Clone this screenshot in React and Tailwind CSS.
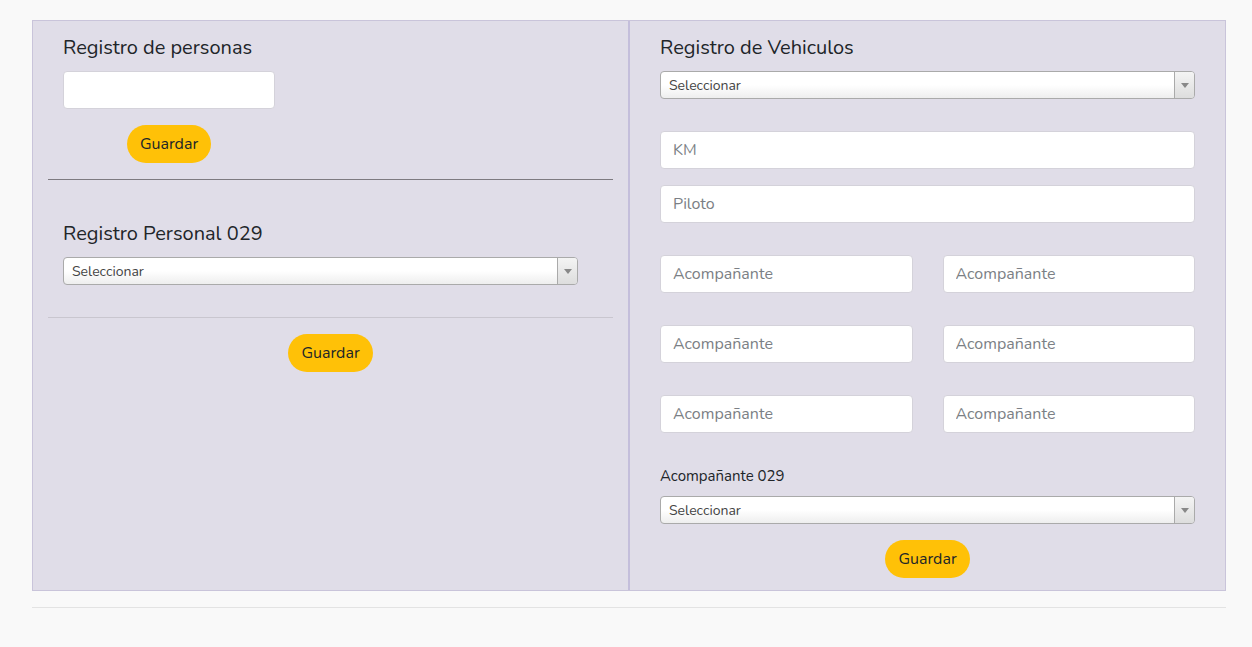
import React from "react";

const font = { fontFamily: '"Nunito", Lato, "Open Sans", sans-serif' };

function Select() {
  return (
    <div className="flex h-[28px] w-full items-stretch overflow-hidden rounded-[4px] border border-[#aaaaaa] bg-gradient-to-b from-white from-50% to-[#eeeeee]">
      <div className="flex flex-1 items-center pl-[8px] text-[14px] text-[#444444]">Seleccionar</div>
      <div className="flex w-[20px] items-center justify-center border-l border-[#aaaaaa] bg-gradient-to-b from-[#f4f4f4] to-[#dddddd]">
        <svg width="8" height="5" viewBox="0 0 8 5"><path d="M0 0h8L4 5z" fill="#888888" /></svg>
      </div>
    </div>
  );
}

function Input({ placeholder, className = "" }) {
  return (
    <input
      placeholder={placeholder}
      style={font}
      className={`h-[38px] rounded-[4px] border border-[#d4d2da] bg-white px-[12px] text-[16px] text-[#495057] placeholder:text-[#7b7f85] outline-none ${className}`}
    />
  );
}

function Btn({ className = "" }) {
  return (
    <button style={font} className={`h-[38px] rounded-full bg-[#ffc107] px-[13px] text-[16px] text-[#212529] ${className}`}>
      Guardar
    </button>
  );
}

export default function App() {
  return (
    <div style={font} className="min-h-[647px] w-full bg-[#f9f9f9] pl-[32px] pr-[26px] pt-[20px] text-[#212529]">
      <div className="flex border border-[#c9c4da] bg-[#e0dde8]">
        {/* Left column */}
        <div className="w-[597px] shrink-0 border-r-2 border-[#c4bedb] pl-[15px] pr-[15px] pt-[15px]">
          <div className="pl-[15px]">
            <h5 className="h-[24px] text-[20px] leading-[24px]">Registro de personas</h5>
            <div className="mt-[11px] w-[212px]">
              <Input className="w-full" />
              <div className="mt-[16px] flex justify-center">
                <Btn />
              </div>
            </div>
          </div>
          <div className="mt-[16px] h-px bg-[#7d7a80]" />
          <div className="pl-[15px] pt-[42px]">
            <h5 className="h-[24px] text-[20px] leading-[24px]">Registro Personal 029</h5>
            <div className="mt-[11px] w-[515px]">
              <Select />
            </div>
          </div>
          <div className="mt-[32px] h-px bg-[#c9c6cf]" />
          <div className="mt-[16px] flex justify-center">
            <Btn />
          </div>
        </div>

        {/* Right column */}
        <div className="flex-1 pb-[12px] pl-[30px] pr-[30px] pt-[15px]">
          <h5 className="h-[24px] text-[20px] leading-[24px]">Registro de Vehiculos</h5>
          <div className="mt-[11px]">
            <Select />
          </div>
          <Input placeholder="KM" className="mt-[32px] block w-full" />
          <Input placeholder="Piloto" className="mt-[16px] block w-full" />
          <div className="mt-[32px] grid grid-cols-2 gap-x-[30px] gap-y-[32px]">
            <Input placeholder="Acompañante" className="w-full" />
            <Input placeholder="Acompañante" className="w-full" />
            <Input placeholder="Acompañante" className="w-full" />
            <Input placeholder="Acompañante" className="w-full" />
            <Input placeholder="Acompañante" className="w-full" />
            <Input placeholder="Acompañante" className="w-full" />
          </div>
          <div className="mt-[33px] h-[20px] text-[15px] leading-[20px]">Acompañante 029</div>
          <div className="mt-[10px]">
            <Select />
          </div>
          <div className="mt-[16px] flex justify-center">
            <Btn />
          </div>
        </div>
      </div>
      <div className="mt-[16px] h-px bg-[#e3e3e3]" />
    </div>
  );
}
